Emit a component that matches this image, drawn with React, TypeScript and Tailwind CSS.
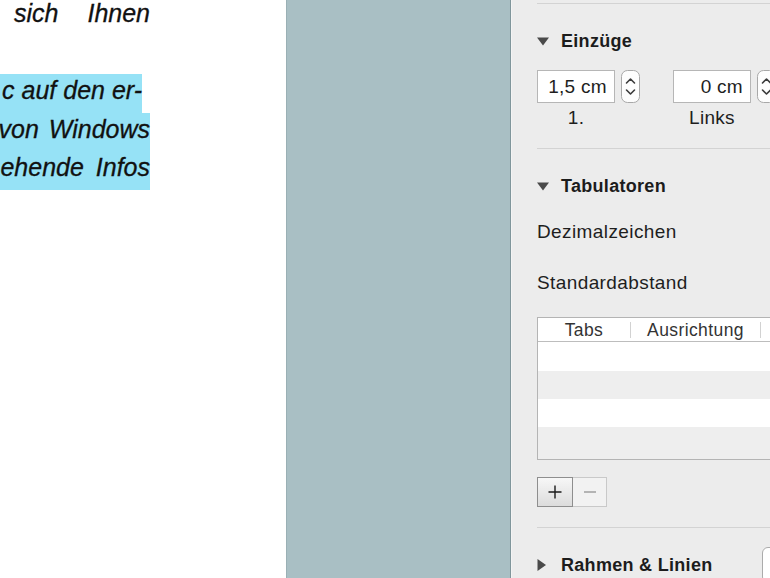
import React from "react";

function Triangle({ open }: { open: boolean }) {
  return (
    <span className="flex w-[12px] shrink-0 items-center">
      {open ? (
        <svg width="12" height="9" viewBox="0 0 12 9">
          <path d="M0 0.5 L12 0.5 L6 8.5 Z" fill="#4a4a4a" />
        </svg>
      ) : (
        <svg width="9" height="12" viewBox="0 0 9 12">
          <path d="M0.5 0 L9 6 L0.5 12 Z" fill="#4a4a4a" />
        </svg>
      )}
    </span>
  );
}

function SectionHeader({ title, open, className = "" }: { title: string; open: boolean; className?: string }) {
  return (
    <div className={`flex h-[24px] items-center gap-[12px] ${className}`}>
      <Triangle open={open} />
      <span className="text-[18px] font-bold leading-[24px] tracking-[0.3px] text-[#1c1c1c]">{title}</span>
    </div>
  );
}

function Stepper() {
  return (
    <svg width="19" height="33" viewBox="0 0 19 33" className="shrink-0">
      <rect x="0.5" y="0.5" width="18" height="32" rx="6" fill="#fdfdfd" stroke="#a8a8a8" />
      <path d="M5.5 13 L9.5 9 L13.5 13" fill="none" stroke="#3a3a3a" strokeWidth="1.6" strokeLinecap="round" strokeLinejoin="round" />
      <path d="M5.5 20 L9.5 24 L13.5 20" fill="none" stroke="#3a3a3a" strokeWidth="1.6" strokeLinecap="round" strokeLinejoin="round" />
    </svg>
  );
}

function Field({ value, label, className = "" }: { value: string; label: string; className?: string }) {
  return (
    <div className={`flex flex-col ${className}`}>
      <div className="flex h-[33px] gap-[6px]">
        <div className="h-[33px] w-[78px] border border-[#b6b6b6] bg-white pr-[7px] text-right text-[19px] leading-[31px] tracking-[0.3px] text-[#1e1e1e]">
          {value}
        </div>
        <Stepper />
      </div>
      <div className="mt-[5px] h-[20px] w-[78px] text-center text-[19px] leading-[20px] tracking-[0.3px] text-[#1e1e1e]">{label}</div>
    </div>
  );
}

const rows = [
  { h: "h-[29px]", bg: "bg-white" },
  { h: "h-[28px]", bg: "bg-[#eeeeee]" },
  { h: "h-[28px]", bg: "bg-white" },
  { h: "h-[32px]", bg: "bg-[#eeeeee]" },
];

export default function App() {
  return (
    <div className="flex h-[578px] w-[770px] overflow-hidden bg-white font-['Liberation_Sans',Arial,sans-serif]">
      {/* document page */}
      <div className="w-[286px] shrink-0 overflow-hidden bg-white">
        <div className="mt-[-3px] text-[25px] italic text-[#111111] [-webkit-text-stroke:0.3px_#111111]">
          <div className="flex h-[38.5px] w-[150px] justify-end whitespace-nowrap leading-[33px] [word-spacing:22px]">sich Ihnen</div>
          <div className="h-[38.5px]" />
          <div className="flex h-[38.5px] w-[142px] justify-end whitespace-nowrap bg-[#96e2f6] leading-[33px]">c auf den er-</div>
          <div className="flex h-[38.5px] w-[150px] justify-end whitespace-nowrap bg-[#96e2f6] leading-[33px] [word-spacing:3px]">von Windows</div>
          <div className="flex h-[38.5px] w-[150px] justify-end whitespace-nowrap bg-[#96e2f6] leading-[33px] [word-spacing:5px]">ehende Infos</div>
        </div>
      </div>

      {/* window background */}
      <div className="w-[224px] shrink-0 border-l border-[#9ab0b5] bg-[#a9bfc4]" />
      <div className="w-px shrink-0 bg-[#80969b]" />
      <div className="w-px shrink-0 bg-[#f4f4f4]" />

      {/* inspector */}
      <div className="w-[300px] shrink-0 bg-[#ececec] pl-[25px]">
        <div className="mt-[3px] h-px bg-[#d3d3d3]" />

        <SectionHeader title="Einzüge" open className="mt-[25px]" />
        <div className="mt-[17px] flex">
          <Field value="1,5 cm" label="1." />
          <Field value="0 cm" label="Links" className="ml-[33px]" />
        </div>

        <div className="mt-[20px] h-px bg-[#d3d3d3]" />

        <SectionHeader title="Tabulatoren" open className="mt-[25px]" />
        <div className="mt-[22px] h-[24px] text-[19px] leading-[24px] tracking-[0.4px] text-[#1e1e1e]">Dezimalzeichen</div>
        <div className="mt-[27px] h-[24px] text-[19px] leading-[24px] tracking-[0.4px] text-[#1e1e1e]">Standardabstand</div>

        <div className="mt-[22px] w-[300px] border border-[#b4b4b4]">
          <div className="flex h-[24px] items-center border-b border-[#bdbdbd] bg-white text-[17.5px] tracking-[0.4px] text-[#333333]">
            <div className="w-[92px] text-center leading-[24px]">Tabs</div>
            <div className="h-[16px] w-px bg-[#d2d2d2]" />
            <div className="w-[129px] text-center leading-[24px]">Ausrichtung</div>
            <div className="h-[16px] w-px bg-[#d2d2d2]" />
          </div>
          {rows.map((r, i) => (
            <div key={i} className={`${r.h} ${r.bg}`} />
          ))}
        </div>

        <div className="mt-[17px] flex h-[30px]">
          <div className="flex w-[36px] items-center justify-center border border-[#8e8e8e] bg-gradient-to-b from-[#f7f7f7] to-[#dcdcdc]">
            <svg width="14" height="14" viewBox="0 0 14 14">
              <path d="M7 0.5 V13.5 M0.5 7 H13.5" stroke="#1a1a1a" strokeWidth="1.4" />
            </svg>
          </div>
          <div className="flex w-[34px] items-center justify-center border border-l-0 border-[#c9c9c9] bg-[#f2f2f2]">
            <svg width="12" height="2" viewBox="0 0 12 2">
              <path d="M0 1 H12" stroke="#9a9a9a" strokeWidth="1.4" />
            </svg>
          </div>
        </div>

        <div className="mt-[20px] h-px bg-[#d3d3d3]" />

        <div className="mt-[19px] flex h-[36px] items-center">
          <div className="w-[225px] shrink-0">
            <SectionHeader title="Rahmen & Linien" open={false} />
          </div>
          <div className="h-[36px] w-[40px] rounded-[6px] border border-[#ababab] bg-white" />
        </div>
      </div>
    </div>
  );
}
